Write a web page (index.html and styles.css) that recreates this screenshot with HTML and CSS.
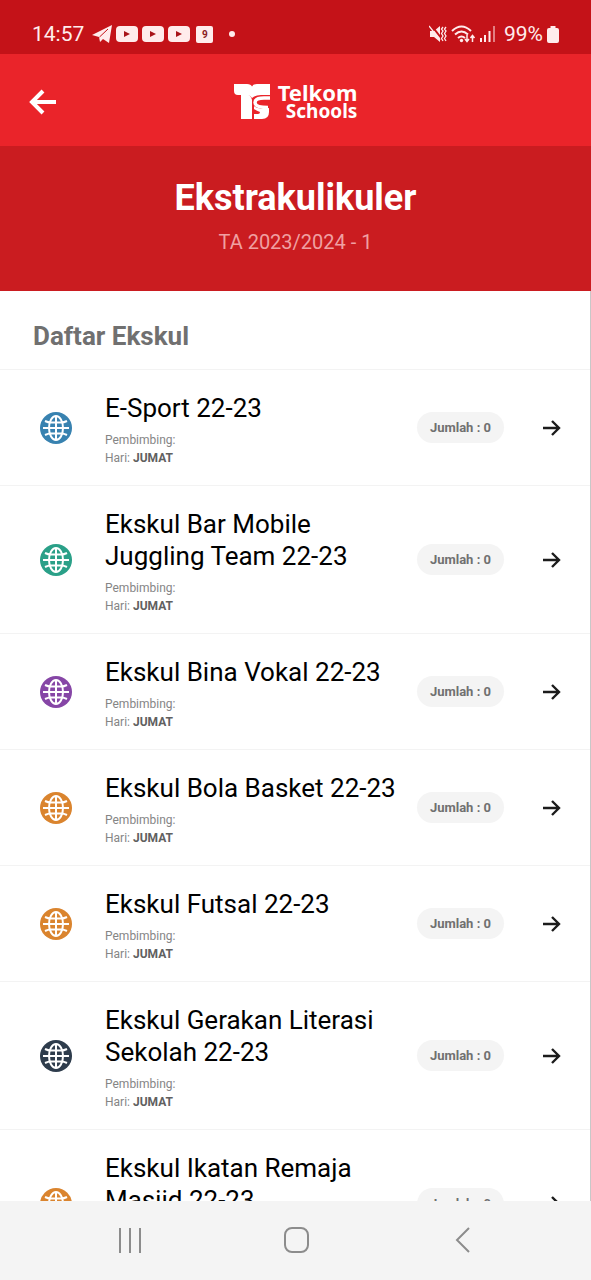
FILE: index.html
```html
<!DOCTYPE html>
<html lang="id">
<head>
<meta charset="utf-8">
<meta name="viewport" content="width=device-width, initial-scale=1">
<title>Ekstrakulikuler</title>
<link rel="stylesheet" href="styles.css">
</head>
<body>
<svg class="defs" width="0" height="0" aria-hidden="true">
  <symbol id="globe" viewBox="0 0 32 32">
    <circle cx="16" cy="16" r="16" fill="currentColor"/>
    <g fill="none" stroke="#fff" stroke-width="2">
      <path d="M16 4v24M3 16h26"/>
      <ellipse cx="16" cy="16" rx="7" ry="12"/>
      <path d="M5 9q3 1.500 6 1.500h10q3 0 6-1.500M5 23q3-1.500 6-1.500h10q3 0 6 1.500"/>
    </g>
  </symbol>
  <symbol id="arrow" viewBox="0 0 20 20">
    <path d="M1 10h16M10 3l7 7-7 7" fill="none" stroke="#1c1c1c" stroke-width="2.400"/>
  </symbol>
  <symbol id="play" viewBox="0 0 22 16">
    <rect width="22" height="16" rx="4" fill="#ffecec"/>
    <path d="M8 5v6l6-3z" fill="#a8141a"/>
  </symbol>
</svg>
<div class="app">
  <div class="status">
    <div class="status-group">
      <span class="clock">14:57</span>
      <svg width="20" height="18" viewBox="0 0 20 18"><path d="M0 10L20 0l-3 18-6-4-3 3-1-5z" fill="#ffecec"/><path d="M7.500 12L16 4" stroke="#c41218"/></svg>
      <svg width="22" height="16"><use href="#play"/></svg>
      <svg width="22" height="16"><use href="#play"/></svg>
      <svg width="22" height="16"><use href="#play"/></svg>
      <span class="calendar">9</span>
      <span class="dot"></span>
    </div>
    <div class="status-group">
      <svg width="18" height="18" viewBox="0 0 18 18"><path d="M1 6h4l6-5v16l-6-5H1z" fill="#ffecec"/><path d="M2 0l11 14" stroke="#c41218" stroke-width="2"/><path d="M0 1l11 14M14 2l-1.500 2L14 6l-1.500 2.500L14 11l-1.500 2.500L14 16M17 2l-1.500 2L17 6l-1.500 2.500L17 11l-1.500 2.500L17 16" fill="none" stroke="#ffecec" stroke-width="1.300"/></svg>
      <svg width="25" height="18" viewBox="0 0 25 18"><g fill="none" stroke="#ffecec" stroke-width="2"><path d="M1 6q9.500-9 19 0M4 9.500q6.500-6 13 0M7 13q3.500-3 7 0"/><path d="M16 10v6M14 14l2 2.500 2-2.500M21.500 17v-6M19.500 13l2-2.500 2 2.500" stroke-width="1.500"/></g><circle cx="10.500" cy="15.500" r="1.700" fill="#ffecec"/></svg>
      <svg width="16" height="16" viewBox="0 0 16 16" fill="#ffecec"><path d="M0 12h2v4H0zM4 9h2v7H4zM8.500 5h2v11h-2z"/><path d="M13 0h2v16h-2z" opacity=".5"/></svg>
      <span class="battery-text">99%</span>
      <svg width="12" height="17" viewBox="0 0 12 17"><path d="M3.500 0h5v2H10q2 0 2 2v11q0 2-2 2H2q-2 0-2-2V4q0-2 2-2h1.500z" fill="#ffecec"/></svg>
    </div>
  </div>

  <header class="topbar">
    <button class="back" type="button" aria-label="Kembali">
      <svg width="28" height="26" viewBox="0 0 28 26"><path d="M27 13H3M14 2L3 13l11 11" fill="none" stroke="#fff" stroke-width="4"/></svg>
    </button>
    <div class="brand">
      <svg width="36" height="36" viewBox="0 0 36 36">
        <path d="M0 0h13q4 0 5 2.500Q19 0 23 0h13v11h-9q-6 0-9 3-2-3-6-3H4Q0 11 0 7z" fill="#fff"/>
        <path d="M7 10h5q5 1 6 6v19H7z" fill="#fff"/>
        <path d="M36 14h-6q-9 0-9 4.500 0 5 13 5" fill="none" stroke="#fff" stroke-width="3.500"/>
        <path d="M20 22q5 4 15 2v4q0 7-7 7h-8v-5h4q2 0 2-2-3-1-6-3z" fill="#fff"/>
      </svg>
      <div class="brand-name"><span class="brand-first">Telkom</span><span class="brand-second">Schools</span></div>
    </div>
  </header>

  <section class="hero">
    <h1>Ekstrakulikuler</h1>
    <p>TA 2023/2024 - 1</p>
  </section>

  <main class="content">
    <h2>Daftar Ekskul</h2>
    <ul class="list">
      <li class="item"><svg class="globe blue"><use href="#globe"/></svg><div class="info"><h3>E-Sport 22-23</h3><p>Pembimbing:</p><p>Hari: <b>JUMAT</b></p></div><span class="count">Jumlah : 0</span><button class="open" type="button" aria-label="Buka E-Sport 22-23"><svg width="20" height="20"><use href="#arrow"/></svg></button></li>
      <li class="item"><svg class="globe green"><use href="#globe"/></svg><div class="info"><h3>Ekskul Bar Mobile Juggling Team 22-23</h3><p>Pembimbing:</p><p>Hari: <b>JUMAT</b></p></div><span class="count">Jumlah : 0</span><button class="open" type="button" aria-label="Buka Ekskul Bar Mobile Juggling Team 22-23"><svg width="20" height="20"><use href="#arrow"/></svg></button></li>
      <li class="item"><svg class="globe purple"><use href="#globe"/></svg><div class="info"><h3>Ekskul Bina Vokal 22-23</h3><p>Pembimbing:</p><p>Hari: <b>JUMAT</b></p></div><span class="count">Jumlah : 0</span><button class="open" type="button" aria-label="Buka Ekskul Bina Vokal 22-23"><svg width="20" height="20"><use href="#arrow"/></svg></button></li>
      <li class="item"><svg class="globe orange"><use href="#globe"/></svg><div class="info"><h3>Ekskul Bola Basket 22-23</h3><p>Pembimbing:</p><p>Hari: <b>JUMAT</b></p></div><span class="count">Jumlah : 0</span><button class="open" type="button" aria-label="Buka Ekskul Bola Basket 22-23"><svg width="20" height="20"><use href="#arrow"/></svg></button></li>
      <li class="item"><svg class="globe orange"><use href="#globe"/></svg><div class="info"><h3>Ekskul Futsal 22-23</h3><p>Pembimbing:</p><p>Hari: <b>JUMAT</b></p></div><span class="count">Jumlah : 0</span><button class="open" type="button" aria-label="Buka Ekskul Futsal 22-23"><svg width="20" height="20"><use href="#arrow"/></svg></button></li>
      <li class="item"><svg class="globe navy"><use href="#globe"/></svg><div class="info"><h3>Ekskul Gerakan Literasi Sekolah 22-23</h3><p>Pembimbing:</p><p>Hari: <b>JUMAT</b></p></div><span class="count">Jumlah : 0</span><button class="open" type="button" aria-label="Buka Ekskul Gerakan Literasi Sekolah 22-23"><svg width="20" height="20"><use href="#arrow"/></svg></button></li>
      <li class="item"><svg class="globe orange"><use href="#globe"/></svg><div class="info"><h3>Ekskul Ikatan Remaja Masjid 22-23</h3><p>Pembimbing:</p><p>Hari: <b>JUMAT</b></p></div><span class="count">Jumlah : 0</span><button class="open" type="button" aria-label="Buka Ekskul Ikatan Remaja Masjid 22-23"><svg width="20" height="20"><use href="#arrow"/></svg></button></li>
    </ul>
  </main>

  <nav class="navbar">
    <button type="button" aria-label="Aplikasi terbaru"><svg width="28" height="28" viewBox="0 0 28 28"><path d="M4 2v25M14 2v25M24 2v25" stroke="#8c8c8c" stroke-width="2"/></svg></button>
    <button type="button" aria-label="Beranda"><svg width="28" height="28" viewBox="0 0 28 28"><rect x="3" y="2" width="23" height="24" rx="7" fill="none" stroke="#8c8c8c" stroke-width="2"/></svg></button>
    <button type="button" aria-label="Kembali ke layar sebelumnya"><svg width="28" height="28" viewBox="0 0 28 28"><path d="M22 2L10 14l12 12" fill="none" stroke="#8c8c8c" stroke-width="2"/></svg></button>
  </nav>
</div>
</body>
</html>
```
FILE: styles.css
```css
* { box-sizing: border-box; margin: 0; padding: 0; }

body { font-family: Roboto, "Liberation Sans", sans-serif; background: #fff; }

.defs { display: none; }
svg { display: block; flex: none; }
button { border: 0; background: none; cursor: pointer; }

.app { display: flex; flex-direction: column; height: 100vh; }

.status {
  display: flex;
  flex: none;
  justify-content: space-between;
  padding: 18px 32px 4px;
  height: 54px;
  background: #c41218;
  color: #ffecec;
}
.status-group { display: flex; align-items: center; gap: 4px; }
.clock { margin-right: 4px; font-size: 21px; }
.battery-text { margin-left: 4px; font-size: 21px; }
.calendar {
  margin-left: 2px;
  width: 17px;
  height: 17px;
  border-radius: 2px;
  background: #ffecec;
  color: #8a1a1e;
  font-size: 10px;
  font-weight: 700;
  line-height: 18px;
  text-align: center;
}
.dot { margin-left: 12px; width: 6px; height: 6px; border-radius: 50%; background: #ffecec; }

.topbar {
  display: grid;
  flex: none;
  grid-template-columns: 1fr auto 1fr;
  align-items: center;
  padding: 0 29px;
  height: 92px;
  background: #ea242a;
}
.back { justify-self: start; padding-top: 4px; }
.brand { display: flex; align-items: center; gap: 8px; padding-top: 4px; color: #fff; }
.brand-name { display: flex; flex-direction: column; align-items: flex-end; font-family: "Noto Sans", sans-serif; font-weight: 700; }
.brand-first { font-size: 22px; line-height: 19px; }
.brand-second { font-size: 19px; line-height: 19px; }

.hero {
  flex: none;
  padding: 29px 16px 34px;
  background: #ca1c20;
  color: #fff;
  text-align: center;
}
.hero h1 { font-size: 36px; font-weight: 700; line-height: 46px; }
.hero p { margin-top: 6px; color: #f0a0a2; font-size: 20px; line-height: 30px; }

.content {
  flex: 1;
  min-height: 0;
  overflow: hidden auto;
  scrollbar-width: none;
  border-right: 1px solid #c8c8c8;
}
.content h2 { padding: 27px 33px 15px; color: #707070; font-size: 26px; font-weight: 700; line-height: 36px; }

.list { list-style: none; }
.item {
  display: flex;
  align-items: center;
  padding: 0 28px 0 40px;
  border-top: 1px solid #f3f3f3;
}
.globe { width: 32px; height: 32px; }
.blue { color: #3882b0; }
.green { color: #2aa088; }
.purple { color: #8646a6; }
.orange { color: #da842e; }
.navy { color: #2e3c4c; }

.info { flex: 1; margin: 0 12px 0 33px; padding: 22px 0 18px; color: #858585; }
.info h3 { margin-bottom: 7px; color: #000; font-size: 26px; font-weight: 400; line-height: 32px; }
.info p { font-size: 12px; line-height: 18px; }
.info b { color: #606060; }

.count {
  flex: none;
  margin-right: 38px;
  padding: 0 13px;
  border-radius: 16px;
  background: #f4f4f4;
  color: #707070;
  font-size: 13px;
  font-weight: 700;
  line-height: 31px;
}

.navbar {
  display: flex;
  flex: none;
  justify-content: space-between;
  align-items: center;
  padding: 0 112px 2px;
  height: 79px;
  background: #f4f4f4;
}
.navbar button { padding: 0 4px; }
```
